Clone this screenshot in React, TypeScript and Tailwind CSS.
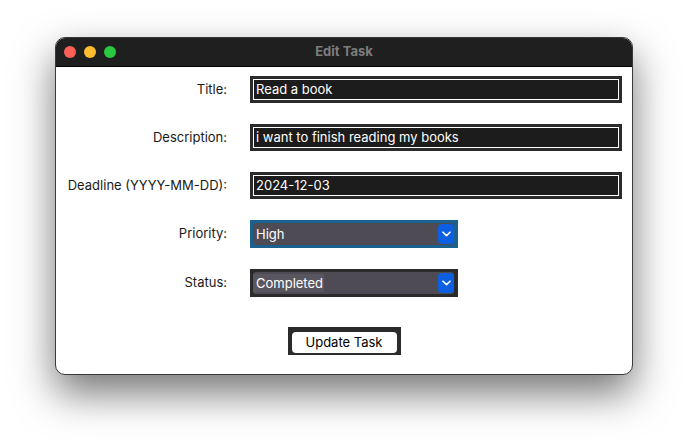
function TextField({ value }: { value: string }) {
  return (
    <div className="w-[372px] h-[27px] bg-[#2b2b2b] p-[3px]">
      <div className="h-full border border-white bg-[#1c1c1c] pl-[2px] flex items-center text-white text-[13px] leading-none">
        {value}
      </div>
    </div>
  )
}

function Chevron() {
  return (
    <div className="w-[16px] h-[20px] rounded-[4px] bg-[#0b5fe0] flex items-center justify-center">
      <svg width="9" height="6" viewBox="0 0 9 6" fill="none">
        <path d="M1 1.2 L4.5 4.6 L8 1.2" stroke="white" strokeWidth="1.6" strokeLinecap="round" strokeLinejoin="round" />
      </svg>
    </div>
  )
}

function SelectField({ value, focused, highlight }: { value: string; focused?: boolean; highlight?: boolean }) {
  return (
    <div className={`w-[208px] h-[28px] pl-[3px] pr-[4px] pt-[3px] pb-[3px] ${focused ? 'bg-[#1b6190]' : 'bg-[#2b2b2b]'}`}>
      <div className="h-full rounded-[3px] bg-[#4f4b54] flex items-center justify-between">
        <span className={`pl-[3px] pr-[1px] text-white text-[13px] leading-[18px] ${highlight ? 'bg-[#5a5660]' : ''}`}>
          {value}
        </span>
        <Chevron />
      </div>
    </div>
  )
}

export default function App() {
  const rows = [
    { label: 'Title:', field: <TextField value="Read a book" /> },
    { label: 'Description:', field: <TextField value="i want to finish reading my books" /> },
    { label: 'Deadline (YYYY-MM-DD):', field: <TextField value="2024-12-03" /> },
    { label: 'Priority:', field: <SelectField value="High" focused /> },
    { label: 'Status:', field: <SelectField value="Completed" highlight /> },
  ]

  return (
    <div className="w-[688px] h-[448px] bg-white overflow-hidden font-['Inter',sans-serif]">
      <div className="ml-[55px] mt-[37px] w-[578px] h-[338px] rounded-[10px] bg-white border border-[#3a3a3a] overflow-hidden shadow-[0_18px_40px_rgba(0,0,0,0.55)]">
        {/* title bar */}
        <div className="h-[29px] bg-[#1f1f1f] border-b border-black relative flex items-center justify-center">
          <div className="absolute left-[8px] top-[8px] flex gap-[8px]">
            <div className="w-[12px] h-[12px] rounded-full bg-[#fe5f57]" />
            <div className="w-[12px] h-[12px] rounded-full bg-[#febc2e]" />
            <div className="w-[12px] h-[12px] rounded-full bg-[#28c840]" />
          </div>
          <span className="text-[13px] font-bold text-[#7d7d7d]">Edit Task</span>
        </div>

        {/* form */}
        <div className="pt-[9px] flex flex-col gap-[21px]">
          {rows.map((r) => (
            <div key={r.label} className="flex items-center">
              <div className="w-[171px] text-right text-[13px] text-[#1a1a1a]">{r.label}</div>
              <div className="ml-[23px]">{r.field}</div>
            </div>
          ))}
        </div>

        <div className="mt-[30px] flex justify-center">
          <div className="bg-[#2b2b2b] pt-[5px] pb-[2px] px-[4px]">
            <div className="w-[105px] h-[21px] rounded-[4px] bg-white flex items-center justify-center text-[13px] text-black">
              Update Task
            </div>
          </div>
        </div>
      </div>
    </div>
  )
}
